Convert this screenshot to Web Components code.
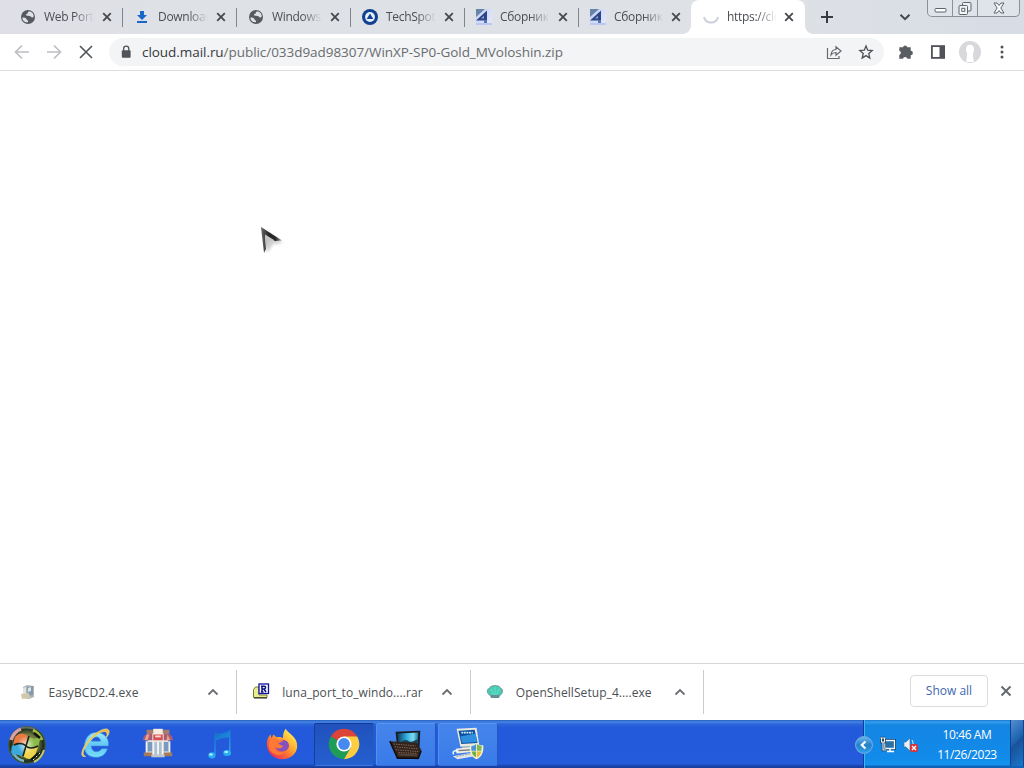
<!DOCTYPE html>
<html lang="en">
<head>
<meta charset="utf-8">
<title>Browser</title>
<style>
    html, body {
        margin: 0;
        width: 1024px;
        height: 768px;
        overflow: hidden;
        font-family: "Open Sans", "Noto Sans", sans-serif;
        font-size: 12px;
        color: #4b4f54;
        background: white;
    }
</style>
</head>
<body>
<desktop-screen></desktop-screen>

<script>
const ICONS = {
    globe: `<circle cx="8" cy="8" r="7" fill="#56595d"/><path d="M2.400 8.500c2 .2 3.500 0 4 1.500s2 .8 1.600 3.200c-3 .5-5.700-1.500-5.600-4.700zM9 2.500c-2 .5-.5 2-2 2.300S5.500 6.500 7 6.800s3.500-.2 4 1 2.500.8 2.700-.5C13.700 4.500 11.500 2.500 9 2.500z" fill="#dee1e6"/>`,
    download: `<path d="M6 2h4v4h3l-5 5-5-5h3zM3 12h10v2H3z" fill="#1a67cb"/>`,
    techspot: `<circle cx="8" cy="8" r="8" fill="#114291"/><circle cx="8" cy="8" r="4.900" fill="#e8f0fa"/><path d="M8 4.500l3.300 5.400H4.700z" fill="#114291"/>`,
    four: `<defs><linearGradient id="g" x2="1" y2=".6"><stop stop-color="#c3cff5"/><stop offset="1" stop-color="#dfe6fc"/></linearGradient></defs><path d="M0 0h16v16H0z" fill="url(#g)"/><path d="M0 0h9L0 8z" fill="#6683a8"/><path d="M0 11.500L11 1.500v10z" fill="#2c4687"/><path d="M5 9.500l3-2.800v2.800z" fill="#8ca4d8"/><path d="M8 11h3v3H8z" fill="#5873b4"/><path d="M0 14h16v2H0z" fill="#b9c8f2"/>`,
    spinner: `<path d="M1 8a7.200 7.200 0 0 0 14 0" fill="none" stroke="#cdd0da" stroke-width="2"/>`,
    close: `<path d="M4.200 4.200l7.600 7.600M11.800 4.200l-7.600 7.600" fill="none" stroke="#45484c" stroke-width="1.800"/>`,
    plus: `<path d="M8 2v12M2 8h12" stroke="#383b40" stroke-width="2"/>`,
    down: `<path d="M3.500 5.700L8 10.200l4.500-4.500" fill="none" stroke="#45484c" stroke-width="2"/>`,
    up: `<path d="M3.500 10.500L8 6l4.500 4.500" fill="none" stroke="#6b6e72" stroke-width="1.800"/>`,
    back: `<path d="M15 8H2M8 1.500L1.500 8 8 14.500" fill="none" stroke="#bdbfc3" stroke-width="1.700"/>`,
    forward: `<path d="M1 8h13M8 1.500L14.500 8 8 14.500" fill="none" stroke="#bdbfc3" stroke-width="1.700"/>`,
    stop: `<path d="M2 2l12 12M14 2L2 14" stroke="#505358" stroke-width="1.600"/>`,
    dismiss: `<path d="M3.500 3.500l9 9M12.500 3.500l-9 9" stroke="#66696d" stroke-width="2"/>`,
    lock: `<rect x="3.800" y="6.300" width="8.800" height="7.500" rx="1" fill="#505357"/><path d="M5.600 7V4.800a2.600 2.600 0 0 1 5.200 0V7" fill="none" stroke="#505357" stroke-width="1.300"/>`,
    share: `<path d="M1.500 4v10.500H13V12M5 11c.4-4 2.500-5.500 5-5.500V2.800L15 7l-5 4.200V8.500c-2 0-3.500.6-5 2.500z" fill="none" stroke="#66696d" stroke-width="1.200"/>`,
    star: `<path d="M8 2l1.700 4.200 4.500.4-3.400 3 1 4.400L8 11.600 4.200 14l1-4.400-3.400-3 4.500-.4z" fill="none" stroke="#4d5055" stroke-width="1.300"/>`,
    puzzle: `<path d="M5 3.300a2.200 2.200 0 0 1 4.300 0h3.400v3.500a2.200 2.200 0 0 1 0 4.400v3.600H9.400a2.300 2.300 0 0 0-4.500 0H1.300v-3.900a2.200 2.200 0 0 0 0-4.200V3.300z" fill="#5a5d61"/>`,
    panel: `<rect x="1.900" y="2.100" width="12.200" height="11.800" fill="none" stroke="#505357" stroke-width="1.800"/><path d="M9.500 2h5v12h-5z" fill="#505357"/>`,
    avatar: `<circle cx="8" cy="8" r="8" fill="#d8d8dc"/><path d="M8 2.800c-2 0-2.900 1.400-2.900 3.300 0 1.500.4 2.300.8 3 0 2.200-.5 4.600-.8 6.100h5.800c-.3-1.500-.8-3.900-.8-6.100.4-.7.800-1.500.8-3 0-1.900-.9-3.300-2.900-3.300z" fill="white"/>`,
    menu: `<g fill="#505357"><circle cx="8" cy="3" r="1.500"/><circle cx="8" cy="8" r="1.500"/><circle cx="8" cy="13" r="1.500"/></g>`,
    exe: `<path d="M3 3l4-2 7 1v11l-5 2-6-1z" fill="#aeb6bc"/><path d="M7 3l6-1v9l-5 1z" fill="#8399aa"/><path d="M3 4l3-1v9l-3 1z" fill="#e0e4df"/><path d="M1 10l8-1 1 5-8 1z" fill="#cfc9ab"/><path d="M8 4l3-1v4l-3 1z" fill="#d8e5ee"/>`,
    rar: `<path d="M.5 5.500l2-2.500H6v8h8v2.500H.5z" fill="#e9ec94" stroke="#77792b"/><path d="M1 14h13" stroke="#222"/><rect x="6" y="0" width="9.500" height="9.500" fill="#f7f8ff" stroke="#15159a" stroke-width="1.300"/><path d="M9 8V2.200h2.200a1.300 1.300 0 0 1 0 2.800H9m2 0l2 3M8 2.200h2M8 8h2.500" fill="none" stroke="#101080" stroke-width="1.500"/>`,
    shell: `<path d="M3 12C-1 9-1 5 2 4c1-2 3-3 6-3s5 1 6 3c3 1 3 5-1 8l-1 2H4z" fill="#71aaa3"/><path d="M4 11C0 9 1 4 5 3c2-1 4-1 6 0 4 1 5 6 1 8z" fill="#48ceb7"/><path d="M8 12V3M7 12L4 5M9 12l3-7" stroke="#70e5cf" stroke-width=".7"/><path d="M4 11h8v3H4z" fill="#658e92"/>`,
    chevronLeft: `<defs><linearGradient id="c" x2="0" y2="1"><stop stop-color="#6cb8f0"/><stop offset=".5" stop-color="#247fca"/><stop offset="1" stop-color="#2da4ec"/></linearGradient></defs><circle cx="8" cy="8" r="7.500" fill="url(#c)" stroke="#6aa9e0"/><path d="M9.300 4.800L6 8l3.300 3.200" fill="none" stroke="white" stroke-width="1.900"/>`,
    network: `<path d="M4.500 3.500h10v8h-10z" fill="#27618d" stroke="#123a60" stroke-width="3"/><path d="M4.500 3.500h10v8h-10z" fill="#2a70a5" stroke="#e9f5ff" stroke-width="1.300"/><path d="M7 14.500h7M10 12v2" stroke="white" stroke-width="1.500"/><path d="M.5 1h5M1.500 1v4h3V1M3 5v8h3" fill="none" stroke="#15395a" stroke-width="2.600"/><path d="M.5 1h5M1.500 1v4h3V1M3 5v8h3" fill="none" stroke="#f2f8ff" stroke-width="1.100"/>`,
    volume: `<path d="M1 5h2l4-4v13l-4-4H1z" fill="#e9f0f6" stroke="#316b95" stroke-width=".6"/><path d="M9 3c1.600 2 1.600 7 0 9" fill="none" stroke="#dff2ff"/><rect x="7" y="7" width="8" height="8" rx="2" fill="#d83338"/><path d="M9 9l4 4M13 9l-4 4" stroke="white" stroke-width="1.400"/>`,
    minimize: `<rect x="3" y="8.500" width="11" height="3.500" rx="1" fill="white" stroke="#5d626b"/>`,
    restore: `<rect x="5.500" y="2.500" width="8.500" height="8.500" rx="1" fill="#eef0f4" stroke="#5d626b"/><rect x="2" y="5.500" width="8.500" height="9" rx="1" fill="#f5f6f8" stroke="#5d626b"/><rect x="4.800" y="8.300" width="3" height="3" fill="white" stroke="#5d626b"/>`,
    exit: `<path d="M3 3h3l2 2.500L10 3h3L9.800 8l3.200 5h-3l-2-2.500L6 13H3l3.200-5z" fill="white" stroke="#5d626b"/>`,
    start: `<defs><radialGradient id="s"><stop stop-color="#b9bd77"/><stop offset=".6" stop-color="#66713a"/><stop offset=".86" stop-color="#1d2b1e"/><stop offset="1" stop-color="#466250"/></radialGradient><radialGradient id="s2"><stop stop-color="#fff"/><stop offset="1" stop-color="#fff" stop-opacity="0"/></radialGradient></defs>
        <circle cx="20" cy="20" r="19" fill="url(#s)"/>
        <path d="M4 15C6 9 9 6 14 4" stroke="#d8a0a8" stroke-width="3.500" fill="none"/><path d="M14 3c5-1 9-1 14 1" stroke="#606b66" stroke-width="2" fill="none"/><path d="M26 5c4 2 7 5 9 10" stroke="#a0bd42" stroke-width="3" fill="none"/><path d="M5 26c3 6 6 9 12 10" stroke="#79b7bd" stroke-width="2.500" fill="none"/><path d="M37 25c-2 6-5 10-10 12" stroke="#c6c86b" stroke-width="2" fill="none"/>
        <path d="M8 12c5-5 9-4 13-1l-2 9c-5-3-9-3-13 0z" fill="#e97a43"/><path d="M22 12c4 2 7 2 12-1l-3 11c-5 2-8 1-12-1z" fill="#8abb48"/><path d="M5 21c5-3 9-3 13 0l-3 11c-4-3-7-3-9-1-2-3-2-6-1-10z" fill="#3ca9dd"/><path d="M19 22c4 2 8 2 12 0l-4 11c-4 2-8 1-11-2z" fill="#eed34d"/>
        <circle cx="19" cy="20" r="9" fill="url(#s2)" opacity=".75"/><path d="M7 20c4-2 9-2 12 1s8 2 12 0M22 11l-6 20" fill="none" stroke="#1b241b" stroke-width="1.600"/><path d="M24 35l8-7M27 8l6 5" stroke="#10160f" stroke-width="2.500"/><path d="M26 35l7-7" stroke="#f1f0b4" stroke-dasharray="2 2"/>`,
    ie: `<defs><linearGradient id="i" x2="0" y2="1"><stop stop-color="#9be9ff"/><stop offset=".5" stop-color="#62c8f5"/><stop offset="1" stop-color="#78def9"/></linearGradient></defs>
        <path d="M33 22H15c0 7 8 8 11 3h6c-2 6-6 9-12 9C11 34 7 28 8 20 9 13 14 8 20 8c9 0 14 6 13 14zM15 17h10c-1-6-8-6-10 0z" fill="url(#i)" stroke="#3b97d9" stroke-width=".6"/>
        <path d="M9 33C2 35 5 24 13 15 20 7 30 2 33 5c2 2 0 6-2 8 1-3 1-5-1-6C25 6 16 13 11 20 6 27 5 32 9 33z" fill="#eebf3f" stroke="#f9dd79" stroke-width=".7"/>`,
    store: `<path d="M9 7h22v25H9z" fill="#e6e2db"/><path d="M8 5h8v4H8zM24 5h8v4h-8z" fill="#a38065"/><path d="M15 4h10v7H15z" fill="#f6ece2"/><path d="M4 16c1-6 5-8 10-7v7H4zM36 16c-1-6-5-8-10-7v7H26z" fill="#a85d71"/><path d="M8 10l-2 6h3l2-6zM30 10l3 6h-4z" fill="#e9a192"/><path d="M15 10h10v6H15z" fill="#d84e54"/><path d="M17 12h6" stroke="#ffd8cd" stroke-width="2"/><path d="M9 18h6v10H9zM25 18h6v10h-6z" fill="#799ac0"/><path d="M16 18h8v14h-8z" fill="#a9bfd5"/><path d="M20 17v15M8 17v15M15 17v15M25 17v15M32 17v15" stroke="#f8f2e8" stroke-width="2"/><path d="M5 29h9v4H5zM26 29h9v4h-9z" fill="#a37a5c"/><path d="M13 31h14v3H13z" fill="#bfc4cc"/>`,
    music: `<defs><linearGradient id="m" x2=".5" y2="1"><stop stop-color="#1569c6"/><stop offset="1" stop-color="#23a0e8"/></linearGradient></defs><path d="M14 8c6 2 11 1 17-3v23h-1.500V13c-5 1-10 1-14 4v14H14z" fill="url(#m)"/><ellipse cx="11.500" cy="32" rx="3.800" ry="3.200" fill="#28aef0"/><ellipse cx="27.500" cy="29.500" rx="4.200" ry="3.200" fill="#28aef0"/><ellipse cx="10.500" cy="31" rx="2" ry="1.300" fill="#a8e8fc"/><ellipse cx="26.500" cy="28.500" rx="2" ry="1.300" fill="#a8e8fc"/>`,
    firefox: `<defs><linearGradient id="f" x1=".9" y1=".1" x2=".2" y2=".9"><stop stop-color="#fff255"/><stop offset=".4" stop-color="#ffb032"/><stop offset=".7" stop-color="#ff6b35"/><stop offset="1" stop-color="#ed315d"/></linearGradient></defs><path d="M4 20c0-5 2-8 4-10l1 4 2-4 3 3c3-1 6 0 7 1 0-4 1-8 3-10 2 5 12 8 12 18 0 8-7 14-16 14S4 29 4 20z" fill="url(#f)"/><path d="M13 21c0-5 9-8 13-3 3 4 1 9-5 10-5 0-8-3-8-7z" fill="#8750bc"/><path d="M8 15c4-2 7-1 10 1l4-1c-1 3-5 3-6 5l5 2c-1 3-6 3-9 1 1 5 6 7 11 5-5 7-17 3-17-7z" fill="#ff7b35"/>`,
    chrome: `<path d="M20 20L6.100 12A16 16 0 0 1 33.900 12z" fill="#db4437"/><path d="M20 20L6.100 12A16 16 0 0 0 20 36l7-12z" fill="#1f9d58"/><path d="M20 12h13.900A16 16 0 0 1 20 36l7-12z" fill="#ffcd40"/><circle cx="20" cy="20" r="8" fill="white"/><circle cx="20" cy="20" r="6.200" fill="#4689f1"/>`,
    laptop: `<defs><linearGradient id="l" x2="1"><stop stop-color="#123a55"/><stop offset=".4" stop-color="#2aa6dd"/><stop offset=".75" stop-color="#7fdcf0"/><stop offset="1" stop-color="#1b6ea3"/></linearGradient></defs><path d="M9 7l26-1-1 22-23-2z" fill="#161c21"/><path d="M11 9l22-1-1 12-20-1z" fill="url(#l)"/><path d="M13 20c4-5 7-5 10-3s6-1 9-2v6H13z" fill="#1e4254"/><path d="M3 17l28 2 5 7-3 10-22-1z" fill="#32231c"/><path d="M7 20l23 2M8 23l24 2M9 26l24 2M12 29l20 1" stroke="#8a6c5c" stroke-width="1" stroke-dasharray="1.500 1"/><path d="M12 31l20 1" stroke="#544438" stroke-width="2"/><path d="M3 17l8 18h22l3-8" fill="none" stroke="#0c0c0e" stroke-width="1.500"/>`,
    setup: `<path d="M8 4l21-1 3 19-20 1z" fill="#ece9dd"/><path d="M10 6l17-1 3 14-17 1z" fill="#0d4fa0"/><path d="M12 12l16-3 2 9-16 1z" fill="#2f8fdf"/><path d="M13 8h12" stroke="#c8ecfa" stroke-width="2" stroke-dasharray="2 .7"/><path d="M14 23h14l2 4H12z" fill="#b7b9b7"/><path d="M7 25l20-2 2 5-21 2z" fill="#f0eee5"/><path d="M10 27l14-1" stroke="#747d83" stroke-width="1.500"/><path d="M4 33l21-4 2 4-18 3z" fill="#dfe5e9"/><path d="M8 33l16-3" stroke="#8c989e" stroke-dasharray="2 1"/><path d="M5 31c-2-3 1-5 4-3" stroke="#eef8ff" stroke-width="1.500" fill="none"/><path d="M22 21c4 1 5 0 7-2 2 2 4 3 7 2 1 8-2 13-7 15-5-2-8-7-7-15z" fill="#f3eecb"/><path d="M23.500 22c3 0 4-1 5-2v7h-5z" fill="#4896d7"/><path d="M29.500 20c1 1 3 2 5 2l-.5 5h-4.500z" fill="#7fb84e"/><path d="M24 28h4.500v6c-3-1-4-3-4.500-6z" fill="#73af42"/><path d="M29.500 28H34c-.5 3-2 5-4.500 6z" fill="#ebb93c"/>`
};

class UiIcon extends HTMLElement {
    constructor() {
        super();
        this.attachShadow({ mode: "open" });
    }

    connectedCallback() {
        const size = this.getAttribute("size") || 16;
        const box = this.getAttribute("box") || 16;

        this.shadowRoot.innerHTML = `
            <style>
                :host { display: block; flex: none; width: ${size}px; height: ${size}px; }
                svg { display: block; overflow: visible; }
            </style>
            <svg width="${size}" height="${size}" viewBox="0 0 ${box} ${box}">${ICONS[this.getAttribute("name")]}</svg>
        `;
    }
}

class BrowserTab extends HTMLElement {
    constructor() {
        super();
        this.attachShadow({ mode: "open" });
    }

    connectedCallback() {
        this.shadowRoot.innerHTML = `
            <style>
                :host {
                    display: flex;
                    align-items: center;
                    position: relative;
                    box-sizing: border-box;
                    width: 114px;
                    height: 34px;
                    padding-left: 12px;
                    letter-spacing: -.3px;
                }
                :host([last]) { width: 113px; }
                :host(:not([active]):not([last]))::after {
                    content: "";
                    position: absolute;
                    right: -1px;
                    top: 8px;
                    width: 1px;
                    height: 19px;
                    background: #80848b;
                }
                :host([active]) {
                    background: white;
                    border-radius: 8px 8px 0 0;
                }
                :host([active])::before, :host([active])::after {
                    content: "";
                    position: absolute;
                    bottom: 0;
                    width: 8px;
                    height: 8px;
                }
                :host([active])::before { left: -8px; background: radial-gradient(circle at 0 0, transparent 7.5px, white 8px); }
                :host([active])::after { right: -8px; background: radial-gradient(circle at 100% 0, transparent 7.5px, white 8px); }
                .title {
                    width: 50px;
                    margin: 0 5px 0 8px;
                    overflow: hidden;
                    white-space: nowrap;
                    line-height: 18px;
                    -webkit-mask-image: linear-gradient(90deg, #000 60%, transparent 100%);
                }
                :host([last]) .title, :host([active]) .title { margin-right: 4px; }
            </style>
            <ui-icon name="${this.getAttribute("icon")}"></ui-icon>
            <div class="title"><slot></slot></div>
            <ui-icon name="close"></ui-icon>
        `;
    }
}

class WindowControls extends HTMLElement {
    constructor() {
        super();
        this.attachShadow({ mode: "open" });
        this.shadowRoot.innerHTML = `
            <style>
                :host {
                    display: flex;
                    box-sizing: border-box;
                    width: 93px;
                    height: 17px;
                    border: 1px solid #8b9098;
                    border-top: 0;
                    border-radius: 0 0 5px 5px;
                    background: #dfe3ea;
                    overflow: hidden;
                }
                div { display: flex; justify-content: center; width: 24px; border-right: 1px solid #8b9098; }
                div:last-child { flex: 1; border: 0; }
            </style>
            <div><ui-icon name="minimize"></ui-icon></div>
            <div><ui-icon name="restore"></ui-icon></div>
            <div><ui-icon name="exit"></ui-icon></div>
        `;
    }
}

class TabStrip extends HTMLElement {
    constructor() {
        super();
        this.attachShadow({ mode: "open" });
        this.shadowRoot.innerHTML = `
            <style>
                :host {
                    display: flex;
                    box-sizing: border-box;
                    height: 34px;
                    padding: 0 4px 0 8px;
                    background: linear-gradient(90deg, #dfe0e7, #dee1e5 20%, #dee1e5 75%, #d7dce5);
                }
                .add { margin: 9px 0 0 14px; }
                .search { margin: 9px 14px 0 auto; }
            </style>
            <slot></slot>
            <ui-icon class="add" name="plus"></ui-icon>
            <ui-icon class="search" name="down"></ui-icon>
            <window-controls></window-controls>
        `;
    }
}

class BrowserToolbar extends HTMLElement {
    constructor() {
        super();
        this.attachShadow({ mode: "open" });
        this.shadowRoot.innerHTML = `
            <style>
                :host {
                    display: flex;
                    align-items: center;
                    box-sizing: border-box;
                    height: 37px;
                    padding: 0 14px;
                    border-bottom: 1px solid #dcdddf;
                    background: white;
                }
                .nav, .actions { display: flex; align-items: center; gap: 16px; }
                .actions { margin-left: 14px; }
                .avatar { margin: 0 -3px; }
                .address {
                    display: flex;
                    align-items: center;
                    box-sizing: border-box;
                    flex: 1;
                    height: 28px;
                    margin-left: 15px;
                    padding: 0 10px 0 9px;
                    border-radius: 14px;
                    background: #f3f4f5;
                }
                .url { flex: 1; margin-left: 8px; font-size: 13.5px; letter-spacing: -.05px; color: #686c70; white-space: nowrap; }
                .url b { font-weight: 400; color: #36393d; }
                .address .star { margin-left: 16px; }
            </style>
            <div class="nav">
                <ui-icon name="back"></ui-icon>
                <ui-icon name="forward"></ui-icon>
                <ui-icon name="stop"></ui-icon>
            </div>
            <div class="address">
                <ui-icon name="lock"></ui-icon>
                <div class="url"><b>cloud.mail.ru</b>/public/033d9ad98307/WinXP-SP0-Gold_MVoloshin.zip</div>
                <ui-icon name="share"></ui-icon>
                <ui-icon class="star" name="star"></ui-icon>
            </div>
            <div class="actions">
                <ui-icon name="puzzle"></ui-icon>
                <ui-icon name="panel"></ui-icon>
                <ui-icon class="avatar" name="avatar" size="22"></ui-icon>
                <ui-icon name="menu"></ui-icon>
            </div>
        `;
    }
}

class DownloadItem extends HTMLElement {
    constructor() {
        super();
        this.attachShadow({ mode: "open" });
    }

    connectedCallback() {
        this.shadowRoot.innerHTML = `
            <style>
                :host {
                    display: flex;
                    align-items: center;
                    box-sizing: border-box;
                    width: 233.600px;
                    height: 44px;
                    padding: 0 15px 0 16px;
                    border-right: 1px solid #c9cbce;
                }
                .name { flex: 1; margin-left: 13px; white-space: nowrap; letter-spacing: .07px; }
            </style>
            <ui-icon name="${this.getAttribute("icon")}"></ui-icon>
            <div class="name"><slot></slot></div>
            <ui-icon name="up"></ui-icon>
        `;
    }
}

class DownloadShelf extends HTMLElement {
    constructor() {
        super();
        this.attachShadow({ mode: "open" });
        this.shadowRoot.innerHTML = `
            <style>
                :host {
                    display: flex;
                    align-items: center;
                    box-sizing: border-box;
                    height: 57px;
                    padding: 0 10px 0 3.600px;
                    border-top: 1px solid #d6d7d9;
                    background: white;
                }
                .all {
                    box-sizing: border-box;
                    width: 78px;
                    height: 32px;
                    margin: -2px 10px 0 auto;
                    border: 1px solid #dadce0;
                    border-radius: 4px;
                    color: #4267b2;
                    font-weight: 500;
                    line-height: 30px;
                    text-align: center;
                }
                ui-icon { margin-top: -2px; }
            </style>
            <slot></slot>
            <div class="all">Show all</div>
            <ui-icon name="dismiss"></ui-icon>
        `;
    }
}

class TaskButton extends HTMLElement {
    constructor() {
        super();
        this.attachShadow({ mode: "open" });
    }

    connectedCallback() {
        this.shadowRoot.innerHTML = `
            <style>
                :host {
                    display: flex;
                    align-items: center;
                    justify-content: center;
                    box-sizing: border-box;
                    width: 62px;
                    height: 44px;
                    padding: 1px;
                }
                div {
                    display: flex;
                    align-items: center;
                    justify-content: center;
                    box-sizing: border-box;
                    width: 60px;
                    height: 43px;
                    border: 1px solid transparent;
                    border-radius: 2px;
                }
                :host([state=open]) div { background: linear-gradient(#4584ea, #397be9); border-color: #5995f0 #2459bd #3471dc #5590ed; }
                :host([state=active]) div { background: linear-gradient(#2051bd, #2460cf); border-color: #133b95 #245cbe #3c79de #173e9b; }
            </style>
            <div><ui-icon name="${this.getAttribute("icon")}" box="40" size="38"></ui-icon></div>
        `;
    }
}

class TaskBar extends HTMLElement {
    constructor() {
        super();
        this.attachShadow({ mode: "open" });
        this.shadowRoot.innerHTML = `
            <style>
                :host {
                    display: flex;
                    height: 48px;
                    background: linear-gradient(#2b5fbd 0, #3571d0 1px, #4586e7 2px, #2d66d8 4px, #2359db 8px, #2459dc 34px, #225cda 44px, #1942a8 46px, #173f9f);
                }
                .start { margin: 5px 18px 0 7px; }
                .tasks { display: flex; padding-top: 2px; }
                .tray {
                    display: flex;
                    align-items: center;
                    box-sizing: border-box;
                    width: 161px;
                    margin-left: auto;
                    border-left: 1px solid #113c9b;
                    box-shadow: inset 1px 0 #45b5f2;
                    background: linear-gradient(#1c75cb 0, #34a0ef 2px, #1585e3 5px, #118bea 38px, #1593ef 45px, #0e62b7 46px);
                    color: white;
                }
                .arrow { margin: 2px 0 0 -9px; }
                .net { margin: 2px 0 0 7px; }
                .vol { margin: 2px 0 0 7px; }
                .clock { width: 78px; margin: 1px 0 0 9px; text-align: center; line-height: 20px; white-space: nowrap; letter-spacing: -.4px; }
                .peek { width: 12px; height: 46px; margin: 0 0 2px auto; border: 1px solid #0b468f; border-width: 0 1px; background: linear-gradient(135deg, #558ed0, #1c62af 45%, #1b5198 50%, #1978cb); }
            </style>
            <ui-icon class="start" name="start" box="40" size="40"></ui-icon>
            <div class="tasks"><slot></slot></div>
            <div class="tray">
                <ui-icon class="arrow" name="chevronLeft" size="18"></ui-icon>
                <ui-icon class="net" name="network"></ui-icon>
                <ui-icon class="vol" name="volume"></ui-icon>
                <div class="clock">10:46 AM<br>11/26/2023</div>
                <div class="peek"></div>
            </div>
        `;
    }
}

class DesktopScreen extends HTMLElement {
    constructor() {
        super();
        this.attachShadow({ mode: "open" });
        this.shadowRoot.innerHTML = `
            <style>
                :host { display: flex; flex-direction: column; position: relative; width: 1024px; height: 768px; }
                .page { flex: 1; background: white; }
                .pointer { position: absolute; left: 257px; top: 224px; }
            </style>
            <tab-strip>
                <browser-tab icon="globe">Web Portal</browser-tab>
                <browser-tab icon="download">Downloads</browser-tab>
                <browser-tab icon="globe">Windows XP</browser-tab>
                <browser-tab icon="techspot">TechSpot</browser-tab>
                <browser-tab icon="four">Сборник</browser-tab>
                <browser-tab icon="four" last>Сборник</browser-tab>
                <browser-tab icon="spinner" active>https://clo</browser-tab>
            </tab-strip>
            <browser-toolbar></browser-toolbar>
            <div class="page"></div>
            <download-shelf>
                <download-item icon="exe">EasyBCD2.4.exe</download-item>
                <download-item icon="rar">luna_port_to_windo....rar</download-item>
                <download-item icon="shell">OpenShellSetup_4....exe</download-item>
            </download-shelf>
            <task-bar>
                <task-button icon="ie"></task-button>
                <task-button icon="store"></task-button>
                <task-button icon="music"></task-button>
                <task-button icon="firefox"></task-button>
                <task-button icon="chrome" state="active"></task-button>
                <task-button icon="laptop" state="open"></task-button>
                <task-button icon="setup" state="open"></task-button>
            </task-bar>
            <svg class="pointer" width="30" height="34" viewBox="0 0 30 34">
                <defs>
                    <filter id="soft"><feGaussianBlur stdDeviation="1.5"/></filter>
                    <linearGradient id="edge" x2="1"><stop stop-color="#666"/><stop offset=".4" stop-color="#252525"/><stop offset=".7" stop-color="#2b2b2b"/><stop offset="1" stop-color="#aaa"/></linearGradient>
                </defs>
                <path d="M6 6l20 13-10 1-6 9z" fill="#777" opacity=".35" filter="url(#soft)"/>
                <path d="M4 3l21 13.500-7 .5-10-6 1 14-2 4z" fill="url(#edge)"/>
                <path d="M8 10.500l9 5.500-5 1-3 7z" fill="#c4c4c4"/>
            </svg>
        `;
    }
}

customElements.define("ui-icon", UiIcon);
customElements.define("browser-tab", BrowserTab);
customElements.define("window-controls", WindowControls);
customElements.define("tab-strip", TabStrip);
customElements.define("browser-toolbar", BrowserToolbar);
customElements.define("download-item", DownloadItem);
customElements.define("download-shelf", DownloadShelf);
customElements.define("task-button", TaskButton);
customElements.define("task-bar", TaskBar);
customElements.define("desktop-screen", DesktopScreen);
</script>
</body>
</html>
